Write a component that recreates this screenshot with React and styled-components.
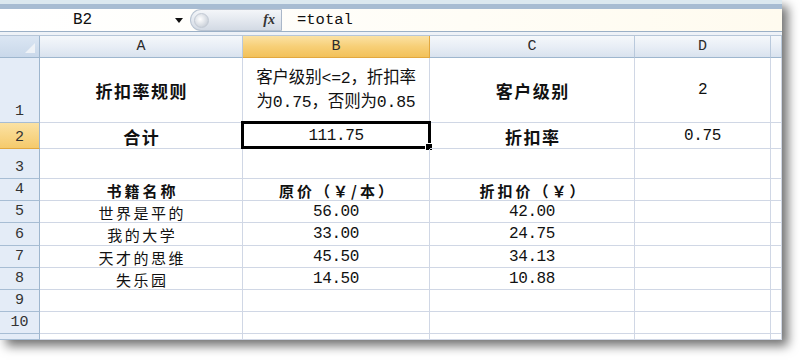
import React from "react";
import styled, { createGlobalStyle } from "styled-components";

const GlobalStyle = createGlobalStyle`
  html, body {
    margin: 0;
    padding: 0;
    background: #ffffff;
  }
  body {
    font-family: "Noto Sans CJK SC", sans-serif;
  }
`;

const Page = styled.div`
  width: 800px;
  height: 360px;
  overflow: hidden;
  background: #ffffff;
`;

const Window = styled.div`
  width: 782px;
  height: 340px;
  overflow: hidden;
  display: flex;
  flex-direction: column;
  background: #ffffff;
  box-shadow: 6px 6px 10px rgba(0, 0, 0, 0.55);
`;

const TopBand = styled.div`
  flex-shrink: 0;
  height: 4px;
  background: #dbe8ef;
  border-bottom: 5px solid #a7bcd2;
`;

const FormulaBar = styled.div`
  flex-shrink: 0;
  height: 22px;
  display: flex;
  align-items: center;
  background: linear-gradient(90deg, #ffffff 0%, #fffdf6 60%, #fffbef 100%);
  border-bottom: 1px solid #9bb0c6;
`;

const NameBox = styled.div`
  width: 190px;
  height: 100%;
  display: flex;
  align-items: center;
  position: relative;
  font-family: "Liberation Mono", monospace;
  font-size: 16px;
  color: #111;
`;

const NameText = styled.span`
  margin-left: 73px;
`;

const DropArrow = styled.span`
  position: absolute;
  left: 175px;
  top: 9px;
  width: 0;
  height: 0;
  border-left: 4px solid transparent;
  border-right: 4px solid transparent;
  border-top: 5px solid #111;
`;

const FxPill = styled.div`
  width: 92px;
  height: 22px;
  box-sizing: border-box;
  border-radius: 11px 0 0 11px;
  background: linear-gradient(180deg, #f4f6f9 0%, #e2e7ee 55%, #d3dae4 100%);
  border: 1px solid #b9c4d2;
  border-right: 1px solid #aab7c8;
  display: flex;
  align-items: center;
  justify-content: space-between;
  padding: 0 6px 0 3px;
`;

const Knob = styled.span`
  width: 13px;
  height: 13px;
  border-radius: 50%;
  background: radial-gradient(circle at 40% 40%, #ffffff 0%, #d6dbe2 60%, #b5bdc8 100%);
  border: 1px solid #c3cad4;
`;

const FxLabel = styled.span`
  font-family: "Liberation Serif", serif;
  font-style: italic;
  font-weight: bold;
  font-size: 14px;
  color: #333;
`;

const FormulaText = styled.div`
  margin-left: 15px;
  font-family: "Liberation Mono", monospace;
  font-size: 15.5px;
  color: #111;
`;

const Strip = styled.div`
  flex-shrink: 0;
  height: 3px;
  background: #eef2f7;
  border-bottom: 1px solid #b6c6d8;
`;

const Sheet = styled.div`
  flex-shrink: 0;
  display: grid;
  grid-template-columns: 40px 203px 187px 205px 136px 11px;
  grid-template-rows: 22px 65px 26px 30px 22px 22px 23px 22px 22px 22px 22px 6px;
`;

const Corner = styled.div`
  background: linear-gradient(180deg, #dbe6f3 0%, #c9d8ea 100%);
  border-right: 1px solid #9eb6ce;
  border-bottom: 1px solid #9eb6ce;
  position: relative;

  &::after {
    content: "";
    position: absolute;
    right: 4px;
    bottom: 4px;
    width: 0;
    height: 0;
    border-left: 10px solid transparent;
    border-bottom: 10px solid #eef2f7;
  }
`;

const ColHead = styled.div`
  display: flex;
  align-items: center;
  justify-content: center;
  font-family: "Liberation Mono", monospace;
  font-size: 15px;
  color: #2b2b2b;
  background: ${(p) =>
    p.$active
      ? "linear-gradient(180deg, #fbe2a4 0%, #f7cf77 50%, #f2c15a 100%)"
      : "linear-gradient(180deg, #f5f8fb 0%, #e7edf5 55%, #d9e2ee 100%)"};
  border-right: 1px solid ${(p) => (p.$active ? "#e2a83f" : "#b9c9dc")};
  border-bottom: 1px solid ${(p) => (p.$active ? "#e2a83f" : "#9eb6ce")};
`;

const RowHead = styled.div`
  display: flex;
  align-items: flex-end;
  justify-content: center;
  padding-bottom: 1px;
  box-sizing: border-box;
  font-family: "Liberation Mono", monospace;
  font-size: 15px;
  line-height: 19px;
  color: #333;
  background: ${(p) =>
    p.$active
      ? "linear-gradient(180deg, #fbe2a4 0%, #f5ca6c 100%)"
      : "#e4ecf7"};
  border-right: 1px solid #9eb6ce;
  border-bottom: 1px solid ${(p) => (p.$active ? "#e2a83f" : "#a7bdd4")};
`;

const textSpacing = (p) => {
  if (p.$num) return "-0.4px";
  if (p.$big) return "1.5px";
  return p.$bold ? "3px" : "2.5px";
};

const Cell = styled.div`
  position: relative;
  display: flex;
  flex-direction: column;
  align-items: center;
  justify-content: center;
  box-sizing: border-box;
  border-right: 1px solid #d0d7e5;
  border-bottom: 1px solid #d0d7e5;
  color: #111;
  font-family: ${(p) =>
    p.$num
      ? '"Liberation Mono", monospace'
      : '"Noto Sans CJK SC", sans-serif'};
  font-size: ${(p) => (p.$num ? "16px" : p.$big ? "17px" : "15px")};
  font-weight: ${(p) => (p.$bold ? 700 : 400)};
  letter-spacing: ${textSpacing};
  text-indent: ${(p) => (p.$num ? "0" : textSpacing(p))};
  line-height: 19px;
  padding-top: 1px;
  white-space: nowrap;
`;

const Line = styled.span`
  font-family: "Liberation Mono", "Noto Sans CJK SC", monospace;
  font-size: 16.5px;
  line-height: 24px;
  letter-spacing: -0.2px;
  text-indent: 0;
`;

const Selection = styled.div`
  position: absolute;
  left: -2px;
  top: -2px;
  right: -2px;
  bottom: -1px;
  border: 3px solid #000;
  pointer-events: none;

  &::after {
    content: "";
    position: absolute;
    right: -5px;
    bottom: -5px;
    width: 6px;
    height: 6px;
    background: #000;
    border: 1px solid #fff;
  }
`;

const columns = ["A", "B", "C", "D"];

const rows = [
  {
    n: 1,
    cells: [
      { t: "折扣率规则", bold: true, big: true },
      { lines: ["客户级别<=2，折扣率", "为0.75，否则为0.85"] },
      { t: "客户级别", bold: true, big: true },
      { t: "2", num: true },
    ],
  },
  {
    n: 2,
    active: true,
    cells: [
      { t: "合计", bold: true, big: true },
      { t: "111.75", num: true, selected: true },
      { t: "折扣率", bold: true, big: true },
      { t: "0.75", num: true },
    ],
  },
  { n: 3, cells: [{}, {}, {}, {}] },
  {
    n: 4,
    cells: [
      { t: "书籍名称", bold: true },
      { t: "原价（￥/本）", bold: true },
      { t: "折扣价（￥）", bold: true },
      {},
    ],
  },
  { n: 5, cells: [{ t: "世界是平的" }, { t: "56.00", num: true }, { t: "42.00", num: true }, {}] },
  { n: 6, cells: [{ t: "我的大学" }, { t: "33.00", num: true }, { t: "24.75", num: true }, {}] },
  { n: 7, cells: [{ t: "天才的思维" }, { t: "45.50", num: true }, { t: "34.13", num: true }, {}] },
  { n: 8, cells: [{ t: "失乐园" }, { t: "14.50", num: true }, { t: "10.88", num: true }, {}] },
  { n: 9, cells: [{}, {}, {}, {}] },
  { n: 10, cells: [{}, {}, {}, {}] },
  { n: "", cells: [{}, {}, {}, {}] },
];

export default function App() {
  return (
    <Page>
      <GlobalStyle />
      <Window>
        <TopBand />
        <FormulaBar>
          <NameBox>
            <NameText>B2</NameText>
            <DropArrow />
          </NameBox>
          <FxPill>
            <Knob />
            <FxLabel>fx</FxLabel>
          </FxPill>
          <FormulaText>=total</FormulaText>
        </FormulaBar>
        <Strip />
        <Sheet>
          <Corner />
          {columns.map((c) => (
            <ColHead key={c} $active={c === "B"}>
              {c}
            </ColHead>
          ))}
          <ColHead />
          {rows.map((r, i) => (
            <React.Fragment key={i}>
              <RowHead $active={r.active}>{r.n}</RowHead>
              {r.cells.map((c, j) => (
                <Cell key={j} $bold={c.bold} $big={c.big} $num={c.num}>
                  {c.lines ? c.lines.map((l) => <Line key={l}>{l}</Line>) : c.t}
                  {c.selected && <Selection />}
                </Cell>
              ))}
              <Cell />
            </React.Fragment>
          ))}
        </Sheet>
      </Window>
    </Page>
  );
}
